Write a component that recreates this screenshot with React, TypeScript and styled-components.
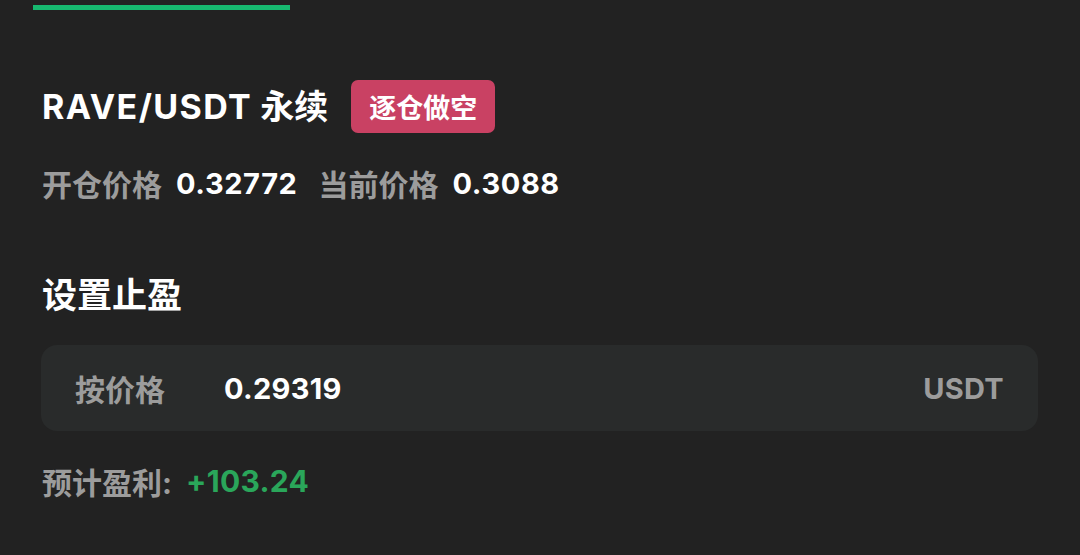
import React from "react";
import styled, { createGlobalStyle } from "styled-components";

const GlobalStyle = createGlobalStyle`
  html, body {
    margin: 0;
    padding: 0;
    background: #222222;
  }
  body {
    font-family: Inter, "Noto Sans CJK SC", sans-serif;
    -webkit-font-smoothing: antialiased;
  }
`;

const App: React.FC = () => {
  return (
    <>
      <GlobalStyle />
      <Page>
        <TabIndicator />
        <Content>
          <TitleRow>
            <Title>
              <Symbol>RAVE/USDT</Symbol> 永续
            </Title>
            <SideTag>逐仓做空</SideTag>
          </TitleRow>
          <PriceRow>
            <PriceLabel>开仓价格</PriceLabel>
            <PriceValue>0.32772</PriceValue>
            <PriceLabel>当前价格</PriceLabel>
            <PriceValue>0.3088</PriceValue>
          </PriceRow>
          <SectionTitle>设置止盈</SectionTitle>
          <InputBox>
            <InputLabel>按价格</InputLabel>
            <InputValue>0.29319</InputValue>
            <Unit>USDT</Unit>
          </InputBox>
          <ProfitRow>
            <PriceLabel>预计盈利:</PriceLabel>
            <Profit>+103.24</Profit>
          </ProfitRow>
        </Content>
      </Page>
    </>
  );
};

export default App;

const Page = styled.div`
  width: 1080px;
  height: 555px;
  background: #222222;
  overflow: hidden;
  padding-top: 5px;
  box-sizing: border-box;
`;

const TabIndicator = styled.div`
  width: 257px;
  height: 5px;
  margin-left: 33px;
  background: #17b86f;
`;

const Content = styled.div`
  display: flex;
  flex-direction: column;
  padding: 0 42px 0 41px;
`;

const TitleRow = styled.div`
  display: flex;
  align-items: center;
  gap: 23px;
  margin-top: 70px;
  padding-left: 1px;
`;

const Title = styled.div`
  font-size: 34px;
  font-weight: 700;
  color: #ffffff;
  line-height: 53px;
`;

const Symbol = styled.span`
  letter-spacing: 1.4px;
`;

const SideTag = styled.div`
  height: 53px;
  padding: 0 18px;
  display: flex;
  align-items: center;
  border-radius: 7px;
  background: #c94163;
  color: #ffffff;
  font-size: 27px;
  font-weight: 700;
`;

const PriceRow = styled.div`
  display: flex;
  align-items: center;
  margin-top: 32px;
  padding-left: 1px;
  height: 36px;
`;

const PriceLabel = styled.span`
  font-size: 30px;
  font-weight: 700;
  color: #9c9c9c;
  margin-right: 14px;
`;

const PriceValue = styled.span`
  font-size: 29px;
  font-weight: 700;
  color: #ffffff;
  letter-spacing: 0.6px;
  margin-right: 21px;
`;

const SectionTitle = styled.div`
  margin-top: 72px;
  padding-left: 1px;
  font-size: 35px;
  font-weight: 700;
  color: #ffffff;
  line-height: 44px;
`;

const InputBox = styled.div`
  display: flex;
  align-items: center;
  margin-top: 28px;
  height: 86px;
  padding: 0 34px;
  border-radius: 16px;
  background: #292b2b;
`;

const InputLabel = styled.span`
  width: 149px;
  font-size: 30px;
  font-weight: 700;
  color: #9c9c9c;
`;

const InputValue = styled.span`
  flex: 1;
  font-size: 29px;
  font-weight: 700;
  color: #ffffff;
  letter-spacing: 0.3px;
`;

const Unit = styled.span`
  font-size: 29px;
  font-weight: 700;
  color: #9c9c9c;
  letter-spacing: 0.3px;
`;

const ProfitRow = styled.div`
  display: flex;
  align-items: center;
  margin-top: 28px;
  padding-left: 1px;
  height: 44px;
`;

const Profit = styled.span`
  font-size: 30px;
  font-weight: 700;
  color: #2aa65a;
  letter-spacing: 0.3px;
`;
